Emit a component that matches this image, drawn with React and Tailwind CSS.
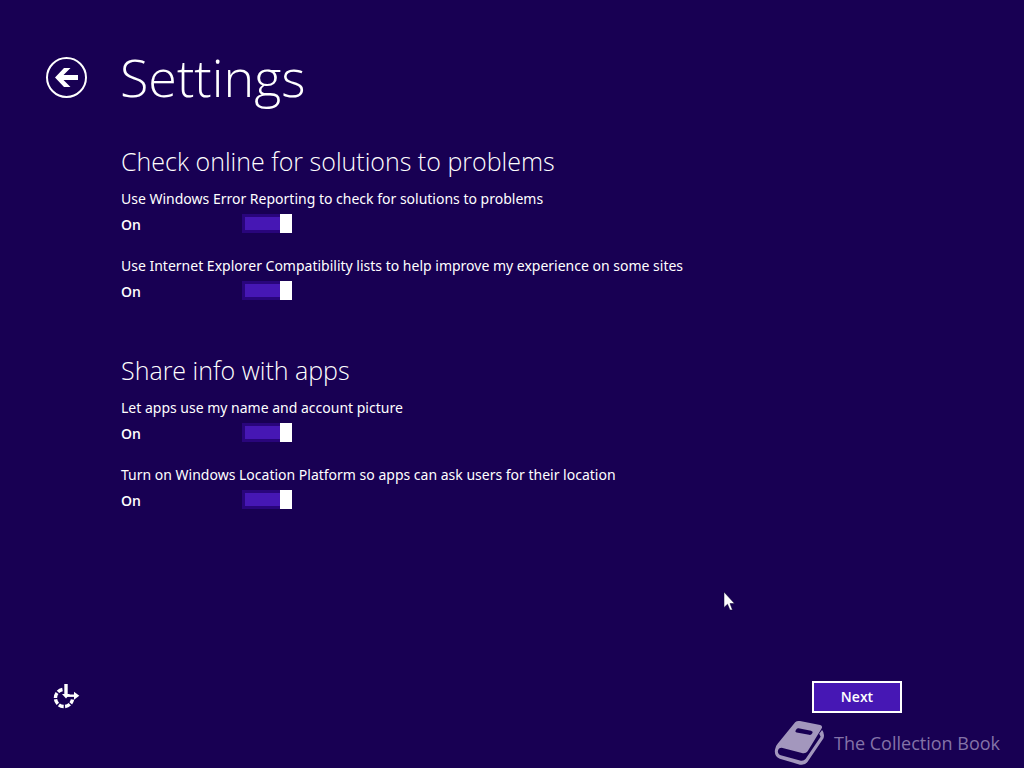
import React, { useState } from 'react'

const sections = [
  {
    title: 'Check online for solutions to problems',
    options: [
      { id: 'error-reporting', label: 'Use Windows Error Reporting to check for solutions to problems' },
      { id: 'compat-lists', label: 'Use Internet Explorer Compatibility lists to help improve my experience on some sites' },
    ],
  },
  {
    title: 'Share info with apps',
    options: [
      { id: 'account-picture', label: 'Let apps use my name and account picture' },
      { id: 'location', label: 'Turn on Windows Location Platform so apps can ask users for their location' },
    ],
  },
]

const ToggleRow = ({ id, label }) => {
  const [on, setOn] = useState(true)

  return (
    <div className="h-[67px]">
      <label htmlFor={id} className="block font-['Noto_Sans',sans-serif] text-sm leading-6 whitespace-nowrap">
        {label}
      </label>
      <div className="flex items-center h-[25px]">
        <span className="w-[121px] pt-0.5 text-sm font-semibold">{on ? 'On' : 'Off'}</span>
        <input
          id={id}
          type="checkbox"
          role="switch"
          checked={on}
          onChange={() => setOn(!on)}
          className="appearance-none flex items-stretch w-[50px] h-[19px] bg-[#29057b] cursor-pointer before:content-[''] before:flex-1 before:ml-[3px] before:my-[3px] before:bg-[#4617b4] after:content-[''] after:w-3 after:bg-white not-checked:flex-row-reverse not-checked:before:ml-0 not-checked:before:mr-[3px] not-checked:before:bg-[#180053]"
        />
      </div>
    </div>
  )
}

const BackIcon = () => (
  <svg viewBox="0 0 42 42" className="w-[42px] h-[42px]" aria-hidden="true">
    <circle cx="21.5" cy="21.5" r="19.5" fill="none" stroke="#fff" strokeWidth="2" />
    <path d="M10 21.5 19 12H25.500L18.500 19H33V24H18.500L25.500 31H19Z" fill="#fff" />
  </svg>
)

const EaseOfAccessIcon = () => (
  <svg viewBox="0 0 28 28" className="w-7 h-7" aria-hidden="true">
    <path
      d="M10.500 6.500A8.600 8.600 0 1 0 20.500 16.500"
      fill="none"
      stroke="#fff"
      strokeWidth="3.4"
      strokeDasharray="5.2 1.4"
    />
    <path d="M14 1V12" stroke="#fff" strokeWidth="3.4" />
    <path d="M10 11H18L14 15.500Z" fill="#fff" />
    <path d="M14 12.700H24" stroke="#fff" strokeWidth="2.4" />
    <path d="M22 8.700 27.300 12.700 22 16.700Z" fill="#fff" />
  </svg>
)

const BookIcon = () => (
  <svg viewBox="0 0 52 48" className="w-[50px] h-12" aria-hidden="true">
    <path
      d="M22 2.5Q24 .6 27 1.2L48 5.2Q51 6 49.5 9L35 32.5Q33 35.5 29 34.5L8 29Q4.500 29 4 32.500Q4 36 8 37L28 42.500Q31 43 33 40.500L48.500 17.500L47 14.500L50 10.500Q53 14 51.500 19L35 43.500Q32 47.500 27 46.500L6 40.500Q0 38 1 31Q1.500 27 4 24.500Z"
      fill="#a397bd"
    />
    <path d="M25.500 8.700 38.500 11.200Q41 12 40 13.500L39 14.800Q38 15.800 36.500 15.500L23.500 13Q21.500 12.500 22.500 11L23.500 9.400Q24.300 8.500 25.500 8.700Z" fill="#180053" />
  </svg>
)

const Pointer = () => (
  <svg viewBox="0 0 12 20" className="absolute left-[71%] top-[77%] w-3 h-5 -ml-[4px] pointer-events-none" aria-hidden="true">
    <path d="M1 1V16.500L4.500 13.200L7 19H9.500L7 12.500H11.500Z" fill="#fff" stroke="#0b0030" strokeWidth=".5" />
  </svg>
)

const App = () => (
  <div className="relative min-h-screen flex flex-col bg-[#180053] text-white font-['Open_Sans','Noto_Sans',sans-serif]">
    <header className="flex items-center pl-[45px] pt-10">
      <button type="button" aria-label="Back" className="mr-[33px] cursor-pointer">
        <BackIcon />
      </button>
      <h1 className="text-[52px] leading-[74px] font-light">Settings</h1>
    </header>

    <main className="flex flex-col gap-[31px] pl-[121px] pt-[29px]">
      {sections.map((section) => (
        <section key={section.title}>
          <h2 className="text-[25px] leading-9 font-light mb-2 whitespace-nowrap">{section.title}</h2>
          {section.options.map((option) => (
            <ToggleRow key={option.id} {...option} />
          ))}
        </section>
      ))}
    </main>

    <footer className="mt-auto">
      <div className="flex items-center justify-between pl-[52px] pr-[122px]">
        <button type="button" aria-label="Ease of access" className="cursor-pointer">
          <EaseOfAccessIcon />
        </button>
        <button
          type="button"
          className="w-[90px] h-8 border-2 border-white bg-[#4617b4] text-sm font-semibold cursor-pointer"
        >
          Next
        </button>
      </div>
      <div className="flex items-center justify-end gap-[10px] pr-6 pt-1.5 pb-px text-[#8473a8]">
        <BookIcon />
        <span className="text-lg">The Collection Book</span>
      </div>
    </footer>

    <Pointer />
  </div>
)

export default App
